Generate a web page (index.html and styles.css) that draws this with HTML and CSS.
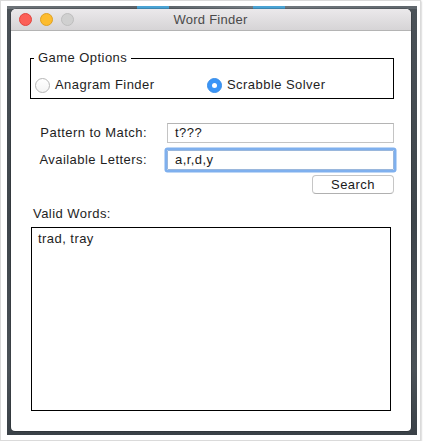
FILE: index.html
```html
<!DOCTYPE html>
<html>
<head>
<meta charset="utf-8">
<link rel="stylesheet" href="styles.css">
</head>
<body>
<div class="shot">
  <div class="desk">
    <div class="window">
      <div class="titlebar">
        <div class="lights">
          <span class="light red"></span>
          <span class="light yellow"></span>
          <span class="light gray"></span>
        </div>
        <div class="title">Word Finder</div>
      </div>
      <div class="content">
        <fieldset class="group">
          <legend class="legend">Game Options</legend>
          <div class="radios">
            <label class="radio"><span class="dot"></span>Anagram Finder</label>
            <label class="radio checked"><span class="dot"></span>Scrabble Solver</label>
          </div>
        </fieldset>
        <div class="form">
          <div class="lbl">Pattern to Match:</div>
          <div class="field">t???</div>
          <div class="lbl">Available Letters:</div>
          <div class="field focus">a,r,d,y</div>
        </div>
        <div class="btnrow"><div class="button">Search</div></div>
        <div class="wlabel">Valid Words:</div>
        <div class="results">trad, tray</div>
      </div>
    </div>
  </div>
</div>
</body>
</html>
```

FILE: styles.css
```css
html, body {
  margin: 0;
  padding: 0;
  background: #ffffff;
}
body {
  font-family: "Liberation Sans", Arial, sans-serif;
  font-size: 13px;
  color: #1e1e1e;
  letter-spacing: 0.45px;
}
.shot {
  width: 421px;
  height: 441px;
  box-sizing: border-box;
  background: #fff;
  border: 1px solid #dadada;
  box-shadow: 0 1px 2px rgba(0,0,0,0.35);
  padding: 5px 3px 5px 6px;
}
.desk {
  width: 410px;
  height: 429px;
  box-sizing: border-box;
  padding: 3px 6px 4px 4px;
  background:
    linear-gradient(#4aa3d4, #4aa3d4) 130px 0 / 32px 3px no-repeat,
    linear-gradient(#4aa3d4, #4aa3d4) 246px 0 / 32px 3px no-repeat,
    linear-gradient(90deg, #6d7378 0, #5a6268 35%, #747b81 60%, #5f666c 100%) 0 0 / 100% 3px no-repeat,
    linear-gradient(180deg, #4b5258 0%, #3e454b 50%, #4a5157 85%, #3a4147 100%);
}
.window {
  width: 400px;
  height: 422px;
  background: #fff;
  border-radius: 5px 5px 4px 4px;
  overflow: hidden;
  box-shadow: 0 0 0 0.5px rgba(0,0,0,0.35);
  display: flex;
  flex-direction: column;
}
.titlebar {
  height: 21px;
  flex: none;
  background: linear-gradient(#ebe9eb, #d6d4d6);
  border-bottom: 1px solid #b4b4b4;
  display: flex;
  align-items: center;
}
.lights {
  display: flex;
  gap: 8px;
  padding-left: 8px;
}
.light {
  width: 11px;
  height: 11px;
  border-radius: 50%;
  display: block;
}
.red { background: #fc5f57; border: 0.5px solid #e0443e; }
.yellow { background: #fdbc2e; border: 0.5px solid #dea123; }
.gray { background: #d0d0d0; border: 0.5px solid #bdbdbd; }
.title {
  flex: 1;
  text-align: center;
  color: #4a4a4a;
  font-size: 13px;
  letter-spacing: 0.25px;
  margin-left: -50px;
  padding-right: 14px;
}
.content {
  padding: 19px 17px 0 19px;
  display: flex;
  flex-direction: column;
}
.group {
  margin: 0;
  border: 1px solid #000;
  padding: 11px 4px 5px 4px;
}
.legend {
  padding: 0 4px;
  margin-left: -1px;
  line-height: 16px;
}
.radios {
  display: flex;
  height: 16px;
  align-items: center;
}
.radio {
  display: flex;
  align-items: center;
  gap: 5px;
  line-height: 16px;
}
.radio:first-child { width: 172px; }
.dot {
  width: 13px;
  height: 13px;
  border-radius: 50%;
  border: 1px solid #b6b6b6;
  background: linear-gradient(#fff, #f4f4f4);
  display: flex;
  align-items: center;
  justify-content: center;
}
.checked .dot {
  background: #3a95f7;
  border-color: #3a8ee8;
}
.checked .dot::after {
  content: "";
  width: 5px;
  height: 5px;
  border-radius: 50%;
  background: #fff;
}
.form {
  margin-top: 24px;
  display: grid;
  grid-template-columns: 117px 1fr;
  column-gap: 20px;
  row-gap: 7px;
  align-items: center;
}
.lbl {
  text-align: right;
  line-height: 16px;
}
.field {
  height: 20px;
  box-sizing: border-box;
  border: 1px solid #c4c4c4;
  border-top-color: #b4b4b4;
  padding: 0 7px;
  line-height: 18px;
  color: #1a1a1a;
}
.field.focus {
  border-color: #9ab7dc;
  box-shadow: 0 0 0 2.5px #7fb0ee;
  border-radius: 1px;
}
.btnrow {
  display: flex;
  justify-content: flex-end;
  margin-top: 5px;
}
.button {
  width: 82px;
  height: 19px;
  box-sizing: border-box;
  border: 1px solid #c6c6c6;
  border-bottom-color: #b0b0b0;
  border-radius: 4px;
  background: #fff;
  text-align: center;
  line-height: 17px;
  color: #1a1a1a;
}
.wlabel {
  margin-top: 12px;
  margin-left: 3px;
  line-height: 16px;
}
.results {
  margin-top: 5px;
  margin-left: 1px;
  margin-right: 3px;
  height: 184px;
  box-sizing: border-box;
  border: 1px solid #000;
  padding: 3px 6px;
  line-height: 16px;
}
```
